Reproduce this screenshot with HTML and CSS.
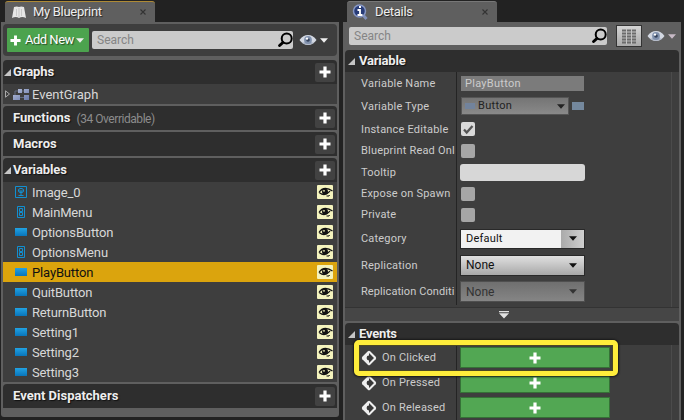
FILE: index.html
```
<!DOCTYPE html>
<html lang="en">
<head>
<meta charset="utf-8">
<title>Blueprint Editor</title>
<link rel="stylesheet" href="styles.css">
</head>
<body>
<svg width="0" height="0" class="defs">
  <defs>
    <linearGradient id="blue" x1="0" y1="0" x2="0" y2="1"><stop offset="0" stop-color="#22a2e2"/><stop offset="1" stop-color="#0875bb"/></linearGradient>
    <linearGradient id="steel" x1="0" y1="0" x2="1" y2="1"><stop offset="0" stop-color="#b9c2dd"/><stop offset="1" stop-color="#6878a8"/></linearGradient>
    <symbol id="plus" viewBox="0 0 12 12"><path d="M4.4.5h3.2v3.9h3.9v3.2H7.6v3.9H4.4V7.6H.5V4.4h3.9z" fill="#fff"/></symbol>
    <symbol id="tri" viewBox="0 0 7 7"><path d="M7 0v7H0z" fill="#c6c6c6"/></symbol>
    <symbol id="down" viewBox="0 0 8 5"><path d="M0 .3h8L4 4.8z" fill="currentColor"/></symbol>
    <symbol id="lens" viewBox="0 0 16 16"><circle cx="9.700" cy="6.600" r="5" fill="none" stroke="#000" stroke-width="2"/><path d="M5.900 10.500 2.600 13.500" stroke="#000" stroke-width="3" stroke-linecap="round"/></symbol>
    <symbol id="view" viewBox="0 0 18 12"><path d="M.5 6Q4 1 9 1t8.500 5Q14 11 9 11T.5 6z" fill="#d3d8e2"/><path d="M3 9q6 3.500 12 0l-3-1H6z" fill="#a8b1c3"/><circle cx="9" cy="6" r="3.900" fill="#8091ad"/><circle cx="9" cy="6" r="1.800" fill="#35435d"/><circle cx="8" cy="4.600" r="1.200" fill="#fff"/></symbol>
    <symbol id="eye" viewBox="0 0 16 14"><rect width="16" height="14" rx="1" fill="#f4f3bd"/><path d="M2 7.500Q4.500 3.500 8.500 3.500q3.500 0 7 2.500M2.500 7.800Q8 12 13 6.200" fill="none" stroke="#111" stroke-width="1.300"/><circle cx="8" cy="6.800" r="3" fill="#111"/><path d="M9.500 11h2.500l.5-1" fill="none" stroke="#111"/><circle cx="7" cy="5.800" r=".9" fill="#f4f3bd"/></symbol>
    <symbol id="button" viewBox="0 0 12 8"><rect width="12" height="8" fill="url(#blue)"/></symbol>
    <symbol id="menu" viewBox="0 0 12 12"><path d="M2.500 .5h7v11h-7zM4.500 2.500h3v3h-3zM4.500 6.500h3v3h-3z" fill="none" stroke="#128fd0"/></symbol>
    <symbol id="image" viewBox="0 0 12 12"><path d="M.5 .5h11v11H.5z" fill="none" stroke="#128fd0"/><path d="M6 9.500V5M3.500 9.500h5M3.500 3.500 5 2.500h2l1.500 1v2L7 6.500H5l-1.500-1z" fill="none" stroke="#128fd0"/><path d="m4 4 4 2M8 4 4 6" stroke="#128fd0" stroke-width=".6"/></symbol>
    <symbol id="event" viewBox="0 0 16 16"><path d="M6.800 1.300Q8 .3 9.200 1.300l5.500 5.500q1 1.200 0 2.400l-5.500 5.500q-1.200 1-2.400 0L1.300 9.200q-1-1.200 0-2.400z" fill="#eee"/><path d="M8 3v2.600a2.400 2.400 0 0 0 0 4.800V13l5-5z" fill="#383838"/></symbol>
  </defs>
</svg>
<div class="editor">
  <section class="pane left">
    <header class="tab active">
      <svg class="book" viewBox="0 0 14 13"><path d="M2 1Q5 0 7 1q2-1 5 0l2 11q-4-2-7 0-3-2-7 0z" fill="#e7e7e7"/><path d="M7 2v9M4.500 3v7M9.500 3v7" stroke="#bbb" stroke-width=".7"/></svg>
      <span class="title">My Blueprint</span><svg class="close" viewBox="0 0 6 6"><path d="m.5.500 5 5m0-5-5 5"/></svg>
    </header>
    <div class="frame">
      <div class="toolbar">
        <button class="add"><svg class="p11"><use href="#plus"/></svg><span>Add New</span><svg class="arrow"><use href="#down"/></svg></button>
        <div class="search"><span>Search</span><svg><use href="#lens"/></svg></div>
        <svg class="view"><use href="#view"/></svg><svg class="arrow"><use href="#down"/></svg>
      </div>
      <div class="section"><svg class="tri"><use href="#tri"/></svg><b>Graphs</b><i class="plusbox"><svg><use href="#plus"/></svg></i></div>
      <div class="graph"><svg class="caret" viewBox="0 0 5 8"><path d="M.5.8v6.400L4.500 4z" fill="none" stroke="#aaa"/></svg><svg class="graphicon" viewBox="0 0 16 13"><g fill="url(#steel)"><path d="M5 1h4v4H5zM11 1h5v4h-5zM0 7h7v5H0zM11 7h5v5h-5z"/></g><path d="M9 3h2M7 9.500h4M2 7V3h3" fill="none" stroke="#626a80"/></svg><span>EventGraph</span></div>
      <div class="section gap"><b>Functions</b><span class="note">(34 Overridable)</span><i class="plusbox"><svg><use href="#plus"/></svg></i></div>
      <div class="section gap"><b>Macros</b><i class="plusbox"><svg><use href="#plus"/></svg></i></div>
      <div class="section gap"><svg class="tri"><use href="#tri"/></svg><b>Variables</b><i class="plusbox"><svg><use href="#plus"/></svg></i></div>
      <div class="vars">
        <div class="var"><svg class="sq"><use href="#image"/></svg><span>Image_0</span><svg class="eye"><use href="#eye"/></svg></div>
        <div class="var"><svg class="sq"><use href="#menu"/></svg><span>MainMenu</span><svg class="eye"><use href="#eye"/></svg></div>
        <div class="var"><svg class="btn"><use href="#button"/></svg><span>OptionsButton</span><svg class="eye"><use href="#eye"/></svg></div>
        <div class="var"><svg class="sq"><use href="#menu"/></svg><span>OptionsMenu</span><svg class="eye"><use href="#eye"/></svg></div>
        <div class="var selected"><svg class="btn"><use href="#button"/></svg><span>PlayButton</span><svg class="eye"><use href="#eye"/></svg></div>
        <div class="var"><svg class="btn"><use href="#button"/></svg><span>QuitButton</span><svg class="eye"><use href="#eye"/></svg></div>
        <div class="var"><svg class="btn"><use href="#button"/></svg><span>ReturnButton</span><svg class="eye"><use href="#eye"/></svg></div>
        <div class="var"><svg class="btn"><use href="#button"/></svg><span>Setting1</span><svg class="eye"><use href="#eye"/></svg></div>
        <div class="var"><svg class="btn"><use href="#button"/></svg><span>Setting2</span><svg class="eye"><use href="#eye"/></svg></div>
        <div class="var"><svg class="btn"><use href="#button"/></svg><span>Setting3</span><svg class="eye"><use href="#eye"/></svg></div>
      </div>
      <div class="section gap"><b>Event Dispatchers</b><i class="plusbox"><svg><use href="#plus"/></svg></i></div>
    </div>
  </section>
  <section class="pane right">
    <header class="tab">
      <svg class="info" viewBox="0 0 16 16"><path d="m11 11 3.500 4" stroke="#8190b8" stroke-width="3"/><circle cx="7.500" cy="7" r="6" fill="#283c78" stroke="#8797c5" stroke-width="1.500"/><path d="M5.500 6H8v5M5.500 11h5M7 3h2" fill="none" stroke="#fff" stroke-width="1.800"/></svg>
      <span class="title">Details</span><svg class="close" viewBox="0 0 6 6"><path d="m.5.500 5 5m0-5-5 5"/></svg>
    </header>
    <div class="frame">
      <div class="tools">
        <div class="search"><span>Search</span><svg><use href="#lens"/></svg></div>
        <div class="matrix"><svg viewBox="0 0 14 15"><path d="M0 1.500h14M0 4.500h14M0 7.500h14M0 10.500h14M0 13.500h14" stroke="#6b6b6b" stroke-width="1.800"/><path d="M4.500 0v15M9.500 0v15" stroke="#c4c4c4"/></svg></div>
        <svg class="view"><use href="#view"/></svg><svg class="arrow"><use href="#down"/></svg>
      </div>
      <div class="cat"><svg class="tri"><use href="#tri"/></svg><b>Variable</b></div>
      <div class="props">
        <div class="row"><label>Variable Name</label><div class="cell"><div class="name">PlayButton</div></div></div>
        <div class="row h24"><label>Variable Type</label><div class="cell"><div class="type"><i class="dim"></i><span>Button</span><svg class="arrow"><use href="#down"/></svg></div><i class="chip"></i></div></div>
        <div class="row"><label>Instance Editable</label><div class="cell"><i class="check on"><svg viewBox="0 0 12 11"><path d="m2 5.500 2.700 3L10.500 2" fill="none" stroke="#555" stroke-width="2.300"/></svg></i></div></div>
        <div class="row h21"><label>Blueprint Read Onl</label><div class="cell"><i class="check"></i></div></div>
        <div class="row"><label>Tooltip</label><div class="cell"><div class="tip"></div></div></div>
        <div class="row h21"><label>Expose on Spawn</label><div class="cell"><i class="check"></i></div></div>
        <div class="row h21"><label>Private</label><div class="cell"><i class="check"></i></div></div>
        <div class="row h27"><label>Category</label><div class="cell"><div class="combo edit"><span>Default</span><i class="drop"><svg class="arrow"><use href="#down"/></svg></i></div></div></div>
        <div class="row h26"><label>Replication</label><div class="cell"><div class="combo"><span>None</span><svg class="arrow"><use href="#down"/></svg></div></div></div>
        <div class="row h29"><label class="tight">Replication Conditi</label><div class="cell"><div class="combo off"><span>None</span><svg class="arrow"><use href="#down"/></svg></div></div></div>
      </div>
      <div class="expander"><svg viewBox="0 0 12 8"><path d="M1 0h10v1.200H1zM1 2.200h10L6 7.500z" fill="#e2e2e2"/></svg></div>
      <div class="cat events"><svg class="tri"><use href="#tri"/></svg><b>Events</b></div>
      <div class="props">
        <div class="row ev"><label><svg><use href="#event"/></svg>On Clicked</label><div class="cell"><button class="bind"><svg><use href="#plus"/></svg></button></div><div class="highlight"></div></div>
        <div class="row ev"><label><svg><use href="#event"/></svg>On Pressed</label><div class="cell"><button class="bind"><svg><use href="#plus"/></svg></button></div></div>
        <div class="row ev"><label><svg><use href="#event"/></svg>On Released</label><div class="cell"><button class="bind"><svg><use href="#plus"/></svg></button></div></div>
      </div>
    </div>
  </section>
</div>
</body>
</html>
```
FILE: styles.css
```
* { box-sizing: border-box; }
body { margin: 0; width: 684px; height: 420px; overflow: hidden; background: #222; color: #d8d8d8; font: 13px/16px Roboto, sans-serif; }
svg { display: block; flex: none; }
.defs { position: absolute; }
i { font-style: normal; flex: none; }
span, label, b { white-space: nowrap; }
button { border: 0; padding: 0; font: inherit; color: #fff; }

.editor { display: flex; gap: 4px; padding-left: 1px; height: 420px; }
.pane { width: 338px; padding-top: 1px; }
.tab { display: flex; align-items: center; width: 150px; height: 21px; margin-left: 4px; padding: 0 9px 0 7px; background: #5f5f5f; border-top: 1px solid #777; border-radius: 3px 3px 0 0; }
.tab.active { border-top-color: #ae8a35; }
.book { width: 14px; height: 13px; }
.title { margin-left: 7px; letter-spacing: -.3px; color: #eee; text-shadow: 1px 1px 1px #222; }
.close { width: 6px; height: 6px; margin-left: auto; fill: none; stroke: #333; stroke-width: 1.1; }
.left .frame { height: 395px; padding: 2px 2px 0 2px; background: #5f5f5f; border-radius: 0 0 3px 3px; }
.toolbar { display: flex; align-items: center; height: 32px; padding-left: 4px; margin-bottom: 4px; background: #3e3e3e; border-radius: 4px; }
.add { display: flex; align-items: center; width: 82px; height: 24px; padding-left: 3px; background: #4ca34e; border-radius: 1px; text-shadow: 1px 1px 1px #264d27; }
.add span { width: 48px; margin: 0 3px 0 4px; letter-spacing: -.5px; text-align: left; }
.p11 { width: 11px; height: 11px; }
.arrow { width: 8px; height: 5px; }
.search { display: flex; align-items: center; justify-content: space-between; height: 18px; background: #cbcbcb; border-radius: 2px; color: #858585; font-size: 12px; }
.search svg { width: 16px; height: 16px; }
.toolbar .search { width: 201px; margin-left: 3px; padding-left: 5px; }
.view { width: 18px; height: 12px; }
.toolbar .view { margin: 0 3px 0 6px; }
.toolbar .arrow { color: #eee; }
.section { display: flex; align-items: center; height: 24px; padding: 0 2px 0 1px; background: #2e2e2e; border-radius: 4px 4px 0 0; }
.section.gap { margin-top: 2px; }
.section b { margin-left: 9px; color: #eee; text-shadow: 1px 1px 1px #111; }
.section .tri + b { margin-left: 2px; letter-spacing: -.1px; }
.tri { width: 7px; height: 7px; }
.plusbox { display: grid; place-items: center; width: 20px; height: 19px; margin-left: auto; background: #424242; border-radius: 2px; }
.plusbox svg { width: 12px; height: 12px; }
.note { margin-left: 6px; padding-top: 1px; font-size: 12px; color: #8c8c8c; letter-spacing: -.45px; }
.graph { display: flex; align-items: center; height: 20px; padding-left: 2px; background: #3e3e3e; }
.graph span { padding-top: 1px; }
.caret { width: 5px; height: 8px; }
.graphicon { width: 16px; height: 13px; margin: 0 3px; }
.var { display: flex; align-items: center; height: 20px; padding: 0 4px 0 12px; background: #3e3e3e; }
.var span { margin-left: 5px; padding-top: 2px; letter-spacing: -.15px; }
.var .sq { width: 12px; height: 12px; }
.btn { width: 12px; height: 8px; }
.eye { width: 16px; height: 14px; margin-left: auto; }
.selected { background: #dba40d; color: #111; }

.right { width: 338px; }
.right .tab { padding-left: 5px; }
.info { width: 16px; height: 16px; }
.right .frame { height: 400px; padding: 3px 2px 0; background: #5f5f5f; }
.tools { display: flex; align-items: center; height: 25px; padding: 0 0 3px 4px; }
.tools .search { width: 258px; padding-left: 5px; }
.matrix { display: grid; place-items: center; width: 26px; height: 22px; margin: 0 5px 0 9px; background: linear-gradient(#d4d4d4, #aaa); border: 1px solid #333; }
.matrix svg { width: 14px; height: 15px; }
.tools .arrow { margin-left: 3px; color: #c7bac6; }
.cat { display: flex; align-items: center; height: 22px; padding-left: 3px; background: #2e2e2e; border-radius: 4px 4px 0 0; }
.cat b { margin-left: 4px; letter-spacing: -.2px; color: #eee; text-shadow: 1px 1px 1px #111; }
.props { background: linear-gradient(90deg, transparent 326px, #4b4b4b 326px 327px, transparent 327px) #3e3e3e; }
.row { position: relative; display: flex; height: 22px; }
.h21 { height: 21px; } .h24 { height: 24px; } .h26 { height: 26px; } .h27 { height: 27px; } .h29 { height: 29px; padding-bottom: 2px; }
.row label { display: flex; align-items: center; width: 112px; padding: 1px 0 0 16px; border-right: 1px solid #242424; font-size: 11px; letter-spacing: .2px; color: #ccc; }
.row label.tight { letter-spacing: .08px; }
.cell { display: flex; align-items: center; padding-left: 4px; }
.name { width: 123px; height: 15px; padding-left: 4px; background: #7b7b7b; color: #ccc; font-size: 11px; line-height: 15px; letter-spacing: .28px; }
.type { display: flex; align-items: center; width: 108px; height: 18px; padding: 0 3px; background: linear-gradient(#757575, #898989); border: 1px solid #555; font-size: 11px; letter-spacing: .3px; color: #222; }
.type span { margin-left: 3px; }
.type .arrow { margin-left: auto; }
.dim { width: 10px; height: 6px; background: #72839c; }
.chip { width: 12px; height: 8px; margin-left: 3px; background: #74889d; }
.check { width: 14px; height: 14px; background: #a6a6a6; border-radius: 2px; }
.check.on { display: grid; place-items: center; background: #d9d9d9; }
.check svg { width: 12px; height: 11px; }
.tip { width: 125px; height: 17px; margin-left: -1px; background: #d7d7d7; border-radius: 3px; }
.combo { display: flex; align-items: center; width: 125px; height: 21px; margin-left: -1px; padding: 0 7px 0 5px; background: linear-gradient(#e0e0e0, #a8a8a8); border: 1px solid #292929; font-size: 12px; color: #111; }
.combo .arrow { margin-left: auto; }
.edit { height: 20px; padding-right: 0; background: #f2f2f2; font-size: 11px; letter-spacing: .2px; }
.drop { display: grid; place-items: center; width: 23px; height: 18px; margin-left: auto; background: linear-gradient(90deg, #aaa, #cfcfcf); }
.drop .arrow { margin: 0; }
.off { background: linear-gradient(#6f6f6f, #858585); border-color: #4f4f4f; color: #333; }
.expander { display: grid; place-items: center; height: 14px; padding-right: 16px; background: #464646; border-top: 1px solid #333; }
.expander svg { width: 12px; height: 8px; }
.events { margin-top: 2px; }
.row.ev { height: 25px; }
.ev label { gap: 5px; padding-top: 0; }
.ev label svg { width: 16px; height: 16px; }
.bind { display: grid; place-items: center; width: 150px; height: 21px; margin-left: -1px; background: #52a753; border: 1px solid #357237; }
.bind svg { width: 12px; height: 12px; }
.highlight { position: absolute; z-index: 1; left: 9px; top: -5px; width: 264px; height: 36px; border: 5px solid #ffed3b; border-radius: 5px; box-shadow: 0 0 2px 1px #181818, inset 0 0 0 1px #4d4823; }
```
